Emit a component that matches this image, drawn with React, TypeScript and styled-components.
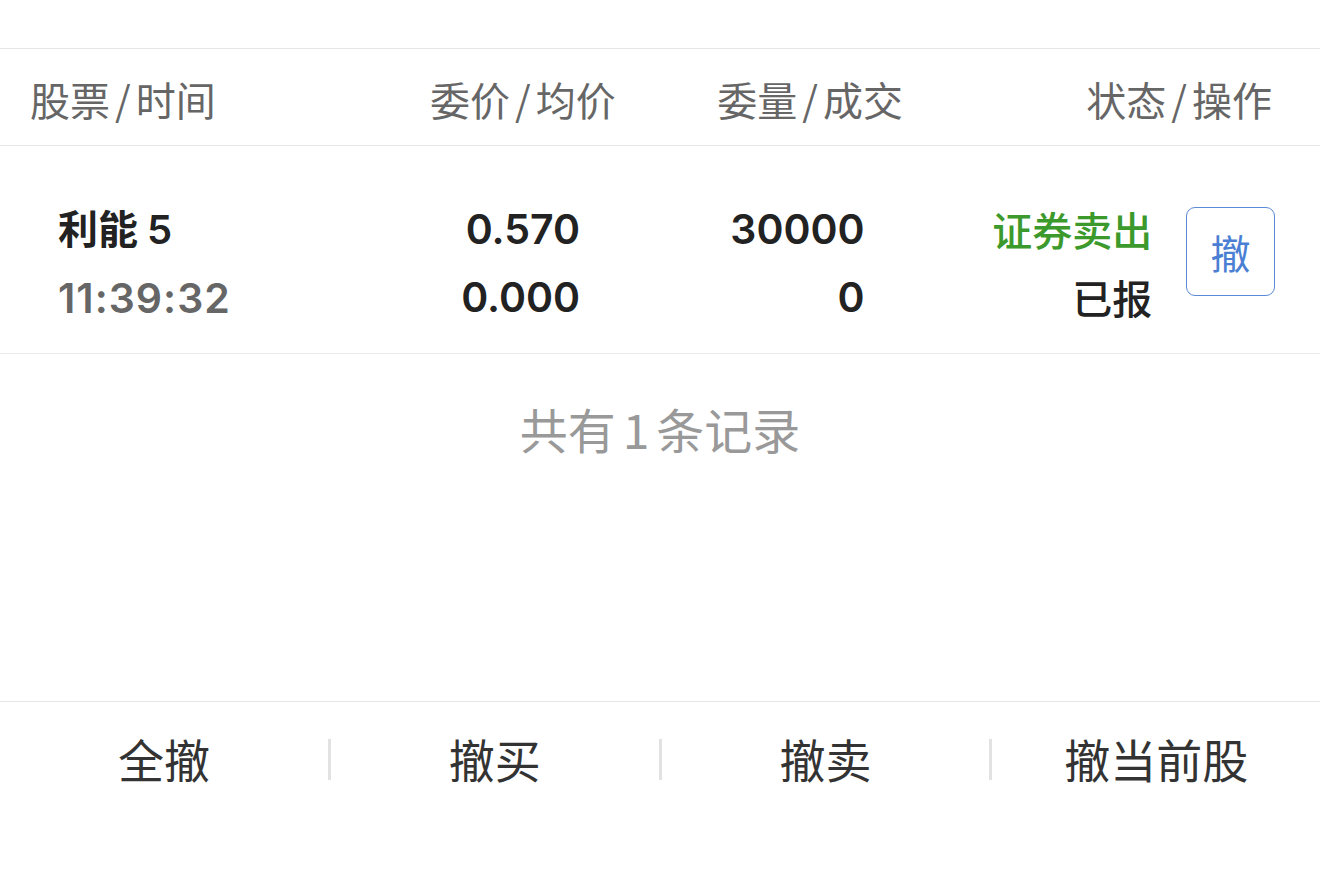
import styled, { createGlobalStyle } from "styled-components";

const GlobalStyle = createGlobalStyle`
  html, body {
    margin: 0;
    padding: 0;
    background: #fff;
  }
  body {
    font-family: "Noto Sans CJK SC", "Noto Sans", sans-serif;
  }
`;

const Page = styled.div`
  width: 1320px;
  height: 896px;
  background: #fff;
  display: flex;
  flex-direction: column;
  overflow: hidden;
`;

const TopSpace = styled.div`
  height: 48px;
  border-bottom: 1px solid #e6e6e6;
`;

const HeaderRow = styled.div`
  height: 97px;
  display: flex;
  align-items: center;
  padding: 4px 48px 0 30px;
  box-sizing: border-box;
  border-bottom: 1px solid #e6e6e6;
  font-size: 40px;
  color: #666;
`;

const HeadCell = styled.div<{ $w: number; $align?: string }>`
  width: ${(p) => p.$w}px;
  text-align: ${(p) => p.$align || "left"};
  white-space: nowrap;
  line-height: 1;
`;

const Slash = styled.span`
  margin: 0 5px;
`;

const OrderRow = styled.div`
  height: 208px;
  display: flex;
  align-items: center;
  padding: 26px 45px 0 58px;
  box-sizing: border-box;
  border-bottom: 1px solid #ececec;
`;

const Col = styled.div<{ $w: number; $align?: string }>`
  width: ${(p) => p.$w}px;
  display: flex;
  flex-direction: column;
  gap: 24px;
  align-items: ${(p) => (p.$align === "right" ? "flex-end" : "flex-start")};
`;

const Val = styled.div<{ $color?: string; $size?: number; $weight?: number; $num?: boolean; $spread?: number }>`
  font-family: ${(p) =>
    p.$num ? `Inter, "Noto Sans CJK SC", sans-serif` : `"Noto Sans CJK SC", "Noto Sans", sans-serif`};
  font-size: ${(p) => p.$size || 41}px;
  font-weight: ${(p) => p.$weight || 700};
  color: ${(p) => p.$color || "#222"};
  letter-spacing: ${(p) => p.$spread || 0}px;
  line-height: 44px;
  white-space: nowrap;
`;

const CancelBtn = styled.button`
  margin-left: 34px;
  width: 89px;
  height: 89px;
  border: 1.5px solid #5b8ad6;
  border-radius: 9px;
  background: #fff;
  color: #4a7fd4;
  font-family: inherit;
  font-size: 40px;
  padding: 0;
  line-height: 1;
  margin-top: -22px;
`;

const Summary = styled.div`
  height: 156px;
  display: flex;
  align-items: center;
  justify-content: center;
  font-size: 48px;
  color: #999;
  padding-bottom: 8px;
  box-sizing: border-box;
`;

const Digit = styled.span`
  margin: 0 7px;
`;

const Spacer = styled.div`
  flex: 1;
  border-bottom: 1px solid #e6e6e6;
`;

const BottomBar = styled.div`
  height: 120px;
  display: flex;
  align-items: flex-start;
  padding-top: 37px;
  box-sizing: border-box;
`;

const BarButton = styled.div<{ $sep?: boolean }>`
  flex: 1;
  height: 41px;
  box-sizing: border-box;
  display: flex;
  align-items: center;
  justify-content: center;
  font-size: 46px;
  line-height: 1;
  color: #333;
  padding-bottom: 4px;
  border-left: ${(p) => (p.$sep ? "3px solid #e2e2e2" : "none")};
`;

const Bottom = styled.div`
  height: 74px;
`;

const bottomActions = ["全撤", "撤买", "撤卖", "撤当前股"];

export default function App() {
  return (
    <Page>
      <GlobalStyle />
      <TopSpace />
      <HeaderRow>
        <HeadCell $w={400}>
          股票<Slash>/</Slash>时间
        </HeadCell>
        <HeadCell $w={182} $align="right">
          委价<Slash>/</Slash>均价
        </HeadCell>
        <HeadCell $w={291} $align="right">
          委量<Slash>/</Slash>成交
        </HeadCell>
        <HeadCell $w={369} $align="right">
          状态<Slash>/</Slash>操作
        </HeadCell>
      </HeaderRow>
      <OrderRow>
        <Col $w={260}>
          <Val $size={40}>
            利能 <Val as="span" $num $size={40} $weight={600}>5</Val>
          </Val>
          <Val $num $weight={600} $color="#666" $spread={1}>
            11:39:32
          </Val>
        </Col>
        <Col $w={263} $align="right">
          <Val $num $weight={600}>0.570</Val>
          <Val $num $weight={600}>0.000</Val>
        </Col>
        <Col $w={285} $align="right">
          <Val $num $weight={600}>30000</Val>
          <Val $num $weight={600}>0</Val>
        </Col>
        <Col $w={288} $align="right">
          <Val $size={40} $weight={500} $color="#3c9a2c">
            证券卖出
          </Val>
          <Val $size={40} $weight={500}>
            已报
          </Val>
        </Col>
        <CancelBtn>撤</CancelBtn>
      </OrderRow>
      <Summary>
        共有<Digit>1</Digit>条记录
      </Summary>
      <Spacer />
      <BottomBar>
        {bottomActions.map((a, i) => (
          <BarButton key={a} $sep={i > 0}>
            {a}
          </BarButton>
        ))}
      </BottomBar>
      <Bottom />
    </Page>
  );
}
